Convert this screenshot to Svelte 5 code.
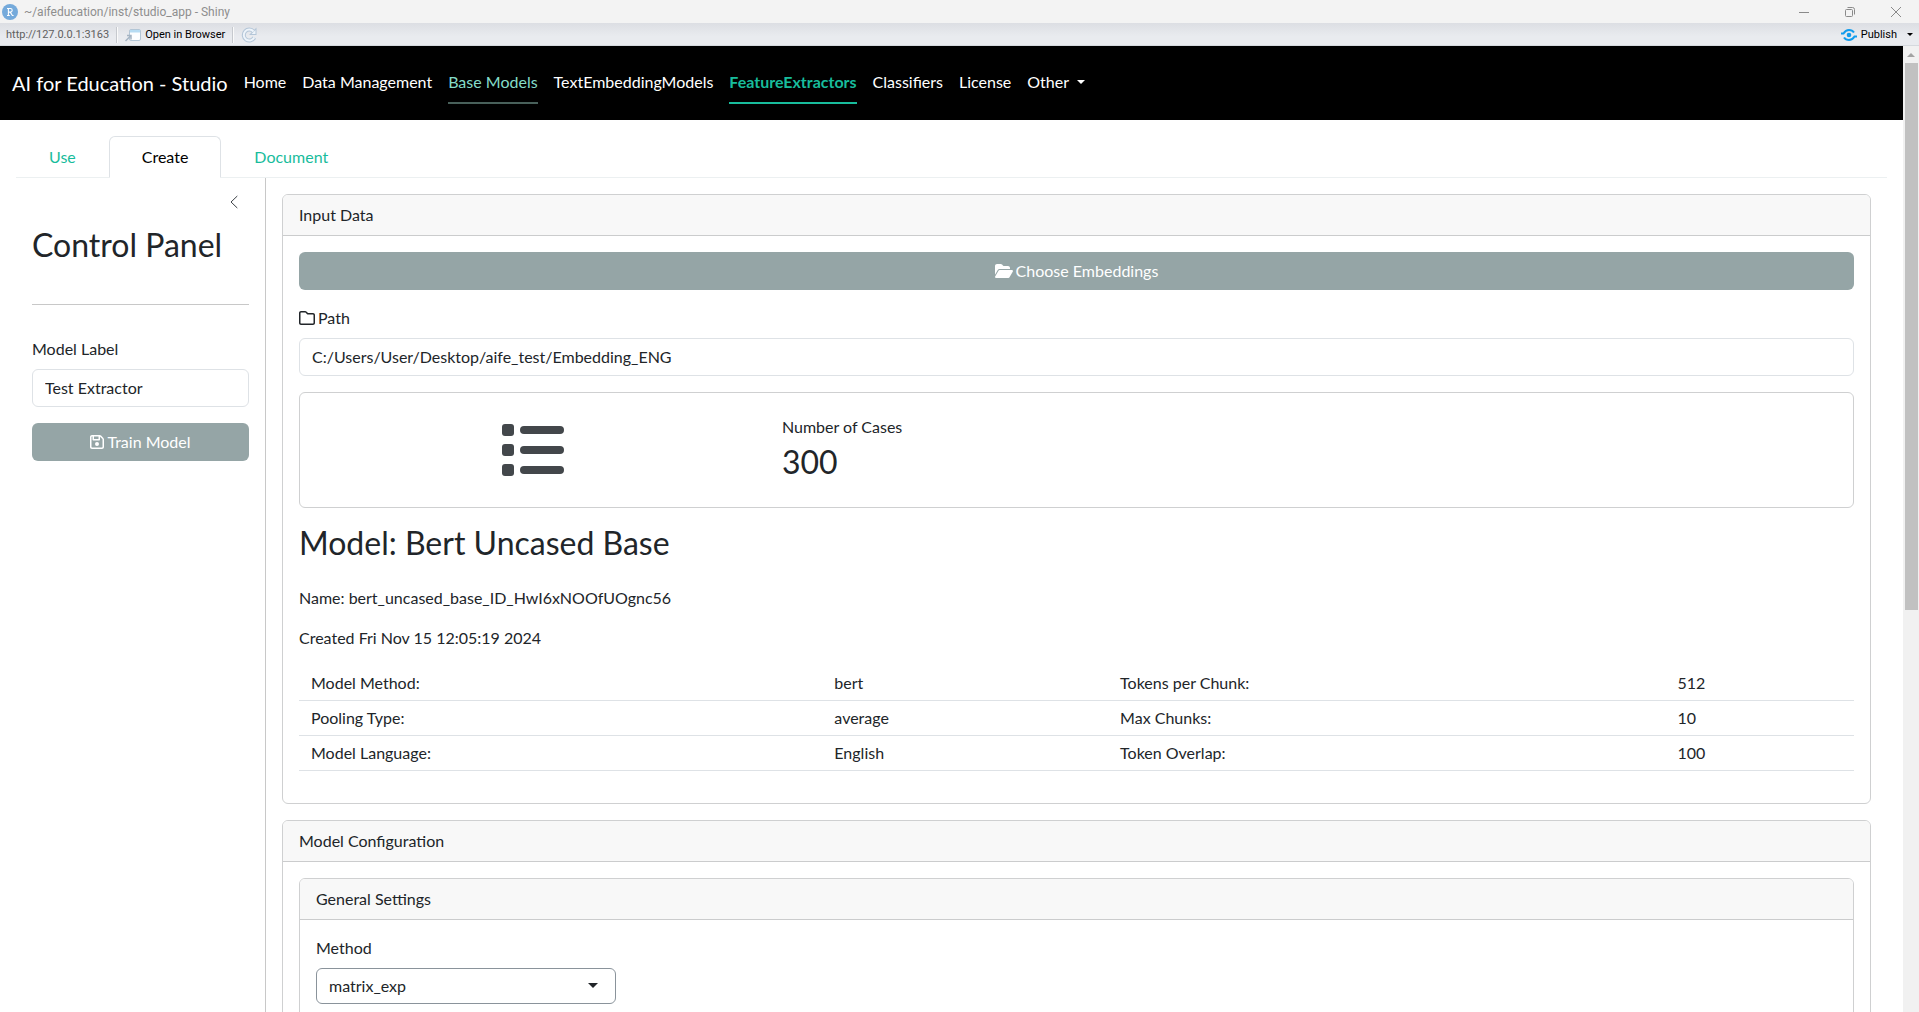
<script lang="ts">
  const links = ['Home', 'Data Management', 'Base Models', 'TextEmbeddingModels', 'FeatureExtractors', 'Classifiers', 'License'];
  const active = 'FeatureExtractors';
  const hovered = 'Base Models';
  const rows = [
    ['Model Method:', 'bert', 'Tokens per Chunk:', '512'],
    ['Pooling Type:', 'average', 'Max Chunks:', '10'],
    ['Model Language:', 'English', 'Token Overlap:', '100']
  ];
  let label = $state('Test Extractor');
  let path = $state('C:/Users/User/Desktop/aife_test/Embedding_ENG');
</script>

<div class="window">
  <header class="titlebar">
    <svg class="logo" viewBox="0 0 16 16" aria-hidden="true">
      <circle cx="8" cy="8" r="8" fill="#75aadb" />
      <path d="M5 4.5h3.4a1.8 1.8 0 0 1 0 3.6H6.4M6.4 4.5v7M5 11.5h2.8M8.2 8.1l2.2 3.4h1.2" fill="none" stroke="#fff" stroke-width="1.1" />
    </svg>
    <span class="title">~/aifeducation/inst/studio_app - Shiny</span>
    <div class="controls">
      <button aria-label="Minimize"><svg viewBox="0 0 10 10"><path d="M0 5.5h10" /></svg></button>
      <button aria-label="Restore"><svg viewBox="0 0 10 10"><rect x="0.5" y="2.5" width="7" height="7" rx="1" /><path d="M2.5 .5h5a2 2 0 0 1 2 2v5" /></svg></button>
      <button aria-label="Close"><svg viewBox="0 0 10 10"><path d="M0 0l10 10M10 0L0 10" /></svg></button>
    </div>
  </header>

  <div class="toolbar">
    <span class="url">http://127.0.0.1:3163</span>
    <i class="sep"></i>
    <button class="tool">
      <svg width="16" height="14" viewBox="0 0 16 14" fill="none" aria-hidden="true">
        <rect x="4.500" y="1.500" width="11" height="11" rx="1.500" fill="#fdfeff" stroke="#b3c6d6" />
        <path d="M5 4.500V2h10v2.500z" fill="#b7dcf3" />
        <path d="M.5 13l5-5M2 7.500h4v4" stroke="#a5b4c3" stroke-width="1.500" />
      </svg>
      Open in Browser
    </button>
    <i class="sep"></i>
    <button class="tool" aria-label="Reload">
      <svg width="16" height="16" viewBox="0 0 16 16" fill="none" aria-hidden="true">
        <path d="M12.500 4.500A5.500 5.500 0 1 0 13.200 10.500" stroke="#b4c6d8" stroke-width="4" />
        <path d="M8 8h7.500V.5z" fill="#b4c6d8" />
        <path d="M12.500 4.500A5.500 5.500 0 1 0 13.200 10.500" stroke="#eef4fa" stroke-width="2" />
        <path d="M10.500 7h4V3z" fill="#eef4fa" />
      </svg>
    </button>
    <button class="tool publish">
      <svg width="16" height="14" viewBox="0 0 16 14" fill="none" aria-hidden="true">
        <circle cx="8" cy="7" r="2.300" fill="#119cec" />
        <path d="M0 5.500h2.500C4 3 6 2 8 2s4 1 5 2.500M16 8.500h-2.500C12 11 10 12 8 12s-4-1-5-2.500" stroke="#119cec" stroke-width="2" />
      </svg>
      Publish
      <i class="caret small"></i>
    </button>
  </div>

  <div class="viewport">
    <div class="page">
      <nav class="navbar">
        <a class="brand" href="#home">AI for Education - Studio</a>
        {#each links as link}
          <a class="link" class:active={link === active} class:hovered={link === hovered} href="#{link}">{link}</a>
        {/each}
        <a class="link other" href="#other">Other <i class="caret"></i></a>
      </nav>

      <div class="content">
        <div class="tabs" role="tablist">
          <a role="tab" aria-selected="false" href="#use">Use</a>
          <a role="tab" aria-selected="true" class="current" href="#create">Create</a>
          <a role="tab" aria-selected="false" href="#document">Document</a>
        </div>

        <div class="layout">
          <aside>
            <button class="collapse" aria-label="Toggle sidebar">
              <svg width="16" height="16" viewBox="0 0 16 16" fill="none"><path d="M11.300 2L5 8l6.300 6" stroke="#3d4247" /></svg>
            </button>
            <h2>Control Panel</h2>
            <hr />
            <div class="field">
              <label for="model-label">Model Label</label>
              <input id="model-label" type="text" bind:value={label} />
            </div>
            <button class="btn">
              <svg width="14" height="16" viewBox="0 0 448 512" fill="#fff" aria-hidden="true"><path d="M48 96V416c0 8.800 7.200 16 16 16H384c8.800 0 16-7.200 16-16V170.500c0-4.200-1.700-8.300-4.700-11.300l33.900-33.900c12 12 18.700 28.300 18.700 45.300V416c0 35.300-28.700 64-64 64H64c-35.300 0-64-28.700-64-64V96C0 60.700 28.700 32 64 32H309.500c17 0 33.300 6.700 45.300 18.700l74.500 74.500-33.900 33.900L320.800 84.700c-.3-.3-.5-.5-.8-.8V184c0 13.300-10.700 24-24 24H104c-13.300 0-24-10.700-24-24V80H64c-8.800 0-16 7.200-16 16zm80-16v80H272V80H128zm32 240a64 64 0 1 1 128 0 64 64 0 1 1-128 0z" /></svg>
              Train Model
            </button>
          </aside>

          <main>
            <section class="card">
              <div class="card-header">Input Data</div>
              <div class="card-body">
                <button class="btn">
                  <svg width="18" height="16" viewBox="0 0 576 512" fill="#fff" aria-hidden="true"><path d="M88.700 223.800L0 375.800V96C0 60.700 28.700 32 64 32H181.500c17 0 33.300 6.700 45.300 18.700l26.500 26.500c12 12 28.300 18.700 45.300 18.700H416c35.300 0 64 28.700 64 64v32H144c-22.800 0-43.800 12.100-55.300 31.800zm27.600 16.100C122.100 230 132.600 224 144 224H544c11.500 0 22 6.100 27.700 16.100s5.700 22.200-.1 32.100l-112 192C453.900 474 443.400 480 432 480H32c-11.500 0-22-6.100-27.700-16.100s-5.700-22.200 .1-32.100l112-192z" /></svg>
                  Choose Embeddings
                </button>
                <div class="field">
                  <label for="path">
                    <svg width="16" height="16" viewBox="0 0 512 512" fill="#212529" aria-hidden="true"><path d="M0 96C0 60.700 28.700 32 64 32H196.100c19.100 0 37.400 7.600 50.900 21.100L289.900 96H448c35.300 0 64 28.700 64 64V416c0 35.300-28.700 64-64 64H64c-35.300 0-64-28.700-64-64V96zM64 80c-8.800 0-16 7.200-16 16V416c0 8.800 7.200 16 16 16H448c8.800 0 16-7.200 16-16V160c0-8.800-7.200-16-16-16H286.600c-10.600 0-20.800-4.200-28.300-11.700L213.100 87c-4.500-4.500-10.600-7-17-7H64z" /></svg>
                    Path
                  </label>
                  <input id="path" type="text" bind:value={path} />
                </div>
                <div class="value-box">
                  <div class="showcase">
                    <svg width="62" height="52" viewBox="0 0 62 52" fill="#43474b" aria-hidden="true">
                      <rect width="12" height="12" rx="3" /><rect y="20" width="12" height="12" rx="3" /><rect y="40" width="12" height="12" rx="3" />
                      <rect x="18" y="2" width="44" height="8" rx="4" /><rect x="18" y="22" width="44" height="8" rx="4" /><rect x="18" y="42" width="44" height="8" rx="4" />
                    </svg>
                  </div>
                  <div class="value">
                    <p>Number of Cases</p>
                    <p class="number">300</p>
                  </div>
                </div>
                <h2>Model: Bert Uncased Base</h2>
                <p>Name: bert_uncased_base_ID_HwI6xNOOfUOgnc56</p>
                <p>Created Fri Nov 15 12:05:19 2024</p>
                <table>
                  <tbody>
                    {#each rows as row}
                      <tr>{#each row as cell}<td>{cell}</td>{/each}</tr>
                    {/each}
                  </tbody>
                </table>
              </div>
            </section>

            <section class="card">
              <div class="card-header">Model Configuration</div>
              <div class="card-body">
                <section class="card">
                  <div class="card-header">General Settings</div>
                  <div class="card-body">
                    <div class="field">
                      <label for="method">Method</label>
                      <div class="select">
                        <select id="method"><option>matrix_exp</option></select>
                        <i class="caret"></i>
                      </div>
                    </div>
                  </div>
                </section>
              </div>
            </section>
          </main>
        </div>
      </div>
    </div>
    <div class="scrollbar" aria-hidden="true">
      <i class="up"></i>
      <div class="track"><div class="thumb"></div></div>
    </div>
  </div>
</div>

<style>
  :global(body) { margin: 0; overflow: hidden; }
  .window, .window * { box-sizing: border-box; }
  .window {
    display: flex;
    flex-direction: column;
    height: 100vh;
    overflow: hidden;
    background: #fff;
    color: #212529;
    font: 16px/24px Lato, "Liberation Sans", sans-serif;
  }
  button, input, select { font: inherit; color: inherit; margin: 0; }
  button { border: 0; background: none; padding: 0; }
  a { text-decoration: none; color: inherit; }
  p, h2, hr { margin: 0; }
  svg { display: block; flex: none; }

  .titlebar {
    display: flex;
    flex: none;
    align-items: center;
    height: 23px;
    padding: 0 18px 0 2px;
    background: #f3f3f3;
    color: #8e8e8e;
    font: 12px/16px Roboto, sans-serif;
  }
  .logo { width: 16px; height: 16px; margin-right: 6px; }
  .controls { display: flex; gap: 36px; margin-left: auto; }
  .controls svg { width: 10px; height: 10px; fill: none; stroke: #8a8a8a; overflow: visible; }

  .toolbar {
    display: flex;
    flex: none;
    align-items: center;
    gap: 7px;
    height: 23px;
    padding: 1px 6px 0;
    background: linear-gradient(#dcdee3, #e9ebef 60%);
    border-bottom: 1px solid #d5d9de;
    color: #000;
    font: 11px/16px Roboto, sans-serif;
  }
  .url { color: #606060; }
  .sep { width: 2px; height: 16px; background: #c6c9ce; border-right: 1px solid #fafafa; }
  .tool { display: flex; align-items: center; gap: 4px; }
  .publish { margin-left: auto; }

  .caret {
    display: inline-block;
    border: 5px solid transparent;
    border-top-color: currentColor;
    border-bottom: 0;
  }
  .caret.small { border-width: 3px 3px 0; margin-left: 6px; }

  .viewport { display: flex; flex: 1; min-height: 0; }
  .page { flex: 1; min-width: 0; overflow: hidden; }

  .navbar {
    display: flex;
    align-items: center;
    gap: 16px;
    padding: 16px 12px;
    background: #000;
    color: #fff;
  }
  .brand { font-size: 20px; line-height: 30px; }
  .link { padding: 8px 0; border-bottom: 2px solid transparent; }
  .link.active { color: #18bc9c; border-color: #18bc9c; font-weight: 700; }
  .link.hovered { color: #84dcc9; border-color: #48605a; }
  .other { display: flex; align-items: center; gap: 8px; }
  .other .caret { border-width: 4px 4px 0; }

  .content { padding: 16px; }
  .tabs { display: flex; border-bottom: 1px solid #ecf0f1; }
  .tabs a {
    margin-bottom: -1px;
    padding: 8px 32px;
    border: 1px solid transparent;
    border-radius: 6px 6px 0 0;
    color: #18bc9c;
  }
  .tabs .current { color: #000; background: #fff; border-color: #dee2e6 #dee2e6 #fff; }

  .layout { display: grid; grid-template-columns: 250px minmax(0, 1fr); }
  aside {
    display: flex;
    flex-direction: column;
    padding: 16px;
    border-right: 1px solid #c8c8c8;
  }
  .collapse { align-self: flex-end; margin-right: 7px; }
  h2 { font-size: 32px; font-weight: 400; line-height: 38px; margin-bottom: 8px; }
  aside h2 { margin: 16px 0 40px; }
  hr { border: 0; border-top: 1px solid #c8c8c8; margin-bottom: 32px; }
  .field { display: flex; flex-direction: column; align-items: stretch; gap: 8px; }
  label { display: flex; align-items: center; gap: 3px; }
  input {
    width: 100%;
    height: 38px;
    padding: 5px 12px 7px;
    border: 1px solid #dee2e6;
    border-radius: 6px;
    background: #fff;
    outline: 0;
  }
  .btn {
    display: flex;
    align-items: center;
    justify-content: center;
    gap: 3px;
    width: 100%;
    height: 38px;
    border-radius: 6px;
    background: #95a5a6;
    color: #fff;
  }
  aside .btn { margin-top: 16px; }

  main { display: flex; flex-direction: column; gap: 16px; padding: 16px; min-width: 0; }
  .card { border: 1px solid #cfd0d1; border-radius: 6px; overflow: hidden; }
  .card-header { padding: 8px 16px; background: #f8f8f8; border-bottom: 1px solid #cbcccd; }
  .card-body { display: flex; flex-direction: column; gap: 16px; padding: 16px; }

  .value-box {
    display: grid;
    grid-template-columns: 30% 1fr;
    align-items: center;
    padding: 22px 0;
    border: 1px solid #cfd0d1;
    border-radius: 6px;
  }
  .showcase { display: flex; justify-content: center; }
  .value { padding: 0 16px 4px; }
  .number { font-size: 32px; line-height: 38px; margin-top: 4px; }

  table { width: 100%; border-collapse: separate; border-spacing: 0; margin-bottom: 16px; }
  td { padding: 5px 12px; border-bottom: 1px solid #dee2e6; }

  .select { position: relative; width: 300px; }
  select {
    display: block;
    width: 100%;
    height: 36px;
    padding: 0 32px 0 12px;
    appearance: none;
    border: 1px solid #8a939b;
    border-radius: 6px;
    background: #fff;
  }
  .select .caret { position: absolute; right: 18px; top: 15px; pointer-events: none; }

  .scrollbar {
    display: flex;
    flex: none;
    flex-direction: column;
    align-items: center;
    width: 16px;
    background: #f1f1f1;
  }
  .up { margin: 7px 0 6px; border: 4px solid transparent; border-bottom-color: #a3a3a3; border-top: 0; }
  .track { flex: 1; width: 13px; }
  .thumb { height: 57.6%; background: #c1c1c1; }
</style>
